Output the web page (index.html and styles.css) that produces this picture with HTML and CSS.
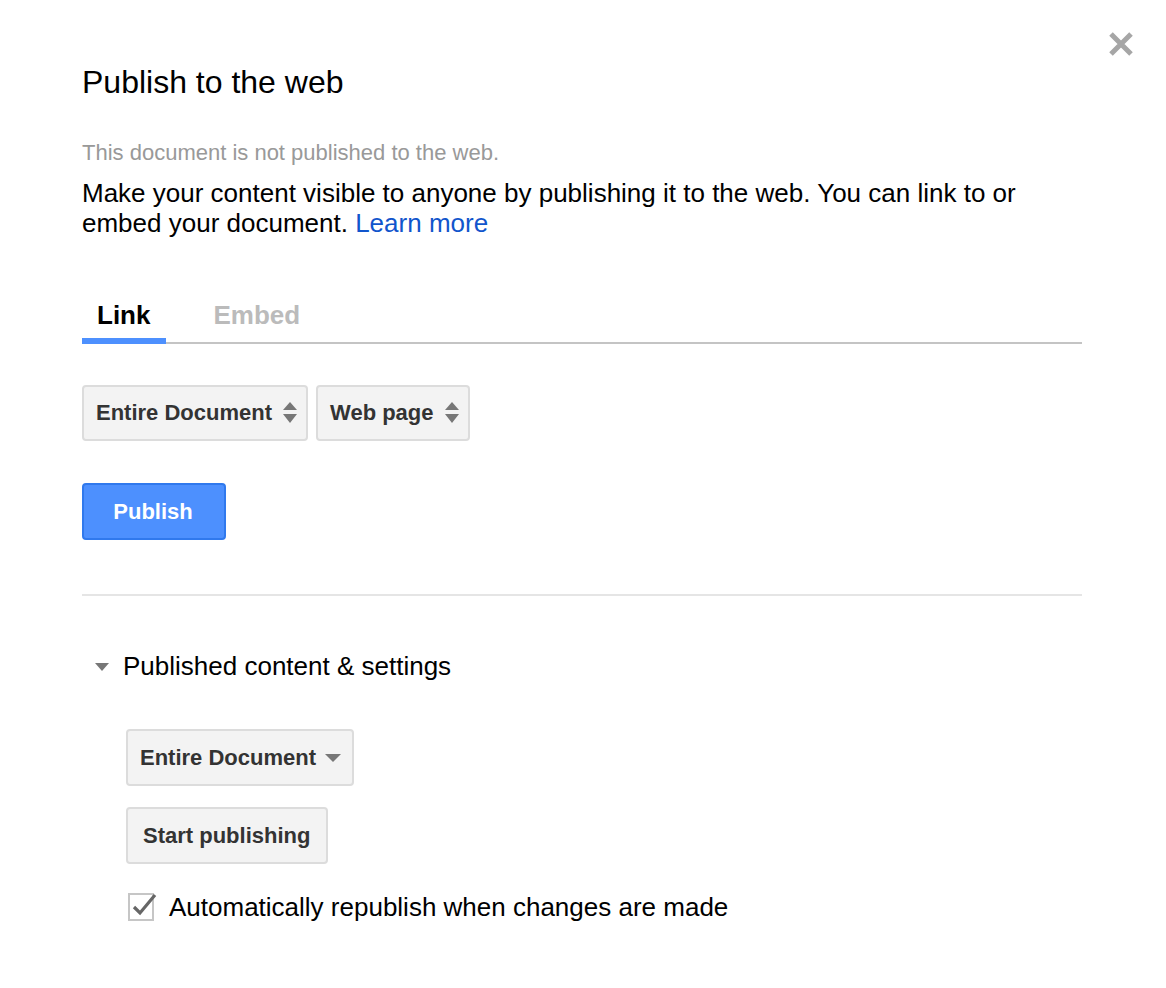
FILE: index.html
```html
<!DOCTYPE html>
<html>
<head>
<meta charset="utf-8">
<link rel="stylesheet" href="styles.css">
</head>
<body>
<div class="dialog">
  <button class="close" aria-label="Close">
    <svg width="26" height="26" viewBox="0 0 26 26"><path d="M3 3 L23 23 M23 3 L3 23" stroke="#a6a6a6" stroke-width="5" stroke-linecap="butt" fill="none"/></svg>
  </button>
  <h1 class="title">Publish to the web</h1>
  <p class="status">This document is not published to the web.</p>
  <p class="desc">Make your content visible to anyone by publishing it to the web. You can link to or embed your document. <a class="link" href="#">Learn more</a></p>

  <div class="tabs">
    <div class="tab active">Link</div>
    <div class="tab">Embed</div>
  </div>

  <div class="selects">
    <div class="select">Entire Document
      <svg class="updown" width="14" height="22" viewBox="0 0 14 22"><path d="M7 0 L14 8 L0 8 Z M0 12 L14 12 L7 21 Z" fill="#777"/></svg>
    </div>
    <div class="select">Web page
      <svg class="updown" width="14" height="22" viewBox="0 0 14 22"><path d="M7 0 L14 8 L0 8 Z M0 12 L14 12 L7 21 Z" fill="#777"/></svg>
    </div>
  </div>

  <button class="publish">Publish</button>

  <div class="rule"></div>

  <div class="section-head">
    <svg class="tri" width="14" height="8" viewBox="0 0 14 8"><path d="M0 0 L14 0 L7 8 Z" fill="#777"/></svg>
    <span>Published content &amp; settings</span>
  </div>

  <div class="settings">
    <div class="btn dropdown">Entire Document
      <svg class="tri" width="16" height="8" viewBox="0 0 16 8"><path d="M0 0 L16 0 L8 8 Z" fill="#777"/></svg>
    </div>
    <div class="btn">Start publishing</div>
    <label class="check">
      <span class="box">
        <svg width="34" height="32" viewBox="0 0 34 32"><path d="M6 18 L12 24 L27 6" stroke="#666" stroke-width="3.2" fill="none"/></svg>
      </span>
      <span>Automatically republish when changes are made</span>
    </label>
  </div>
</div>
</body>
</html>
```

FILE: styles.css
```css
html, body {
  margin: 0;
  padding: 0;
  background: #fff;
}
body {
  font-family: "Liberation Sans", Arial, sans-serif;
  color: #000;
}
.dialog {
  position: relative;
  width: 1000px;
  padding: 62px 0 0 82px;
}
.close {
  position: absolute;
  top: 31px;
  left: 1108px;
  padding: 0;
  border: 0;
  background: none;
  filter: blur(0.7px);
}
.close svg { display: block; }
.title {
  margin: 0;
  font-size: 32px;
  font-weight: normal;
  line-height: 40px;
}
.status {
  margin: 38px 0 0;
  font-size: 22px;
  line-height: 26px;
  color: #999;
}
.desc {
  margin: 12px 0 0;
  font-size: 26px;
  line-height: 30px;
  width: 960px;
}
.link {
  color: #15c;
  text-decoration: none;
}
.tabs {
  display: flex;
  margin-top: 62px;
  border-bottom: 2px solid #c4c4c4;
}
.tab {
  font-size: 26px;
  line-height: 30px;
  font-weight: bold;
  color: #bbb;
  padding: 0 16px 8px 15px;
  margin-bottom: -2px;
  border-bottom: 6px solid transparent;
}
.tab + .tab { margin-left: 32px; }
.tab.active {
  color: #000;
  border-bottom-color: #4d90fe;
}
.selects {
  display: flex;
  gap: 8px;
  margin-top: 41px;
}
.select, .btn {
  display: flex;
  align-items: center;
  height: 52px;
  border: 2px solid #dcdcdc;
  border-radius: 4px;
  background: #f3f3f3;
  color: #333;
  font-size: 22px;
  font-weight: bold;
  padding: 0 9px 0 12px;
}
.updown { margin-left: 11px; }
.publish {
  display: block;
  margin-top: 42px;
  height: 57px;
  width: 144px;
  border: 2px solid #3079ed;
  border-radius: 4px;
  background: #4d90fe;
  color: #fff;
  font-family: "Liberation Sans", Arial, sans-serif;
  font-size: 22px;
  font-weight: bold;
  padding: 0 2px 0 0;
}
.rule {
  margin-top: 54px;
  height: 2px;
  background: #e5e5e5;
}
.section-head {
  display: flex;
  align-items: center;
  margin-top: 55px;
  padding-left: 13px;
  font-size: 26px;
  line-height: 30px;
}
.section-head .tri { margin-right: 14px; margin-top: 2px; }
.settings {
  padding-left: 44px;
  margin-top: 48px;
  display: flex;
  flex-direction: column;
  align-items: flex-start;
  gap: 21px;
}
.btn {
  height: 53px;
  padding: 0 16px 0 15px;
}
.dropdown {
  padding: 0 11px 0 12px;
}
.dropdown .tri { margin-left: 9px; }
.check {
  display: flex;
  align-items: center;
  font-size: 26px;
  line-height: 30px;
  margin-top: 7px;
  margin-left: 2px;
}
.box {
  position: relative;
  width: 22px;
  height: 24px;
  border: 2px solid #c6c6c6;
  margin-right: 15px;
}
.box svg {
  position: absolute;
  left: -2px;
  top: -6px;
}
```
